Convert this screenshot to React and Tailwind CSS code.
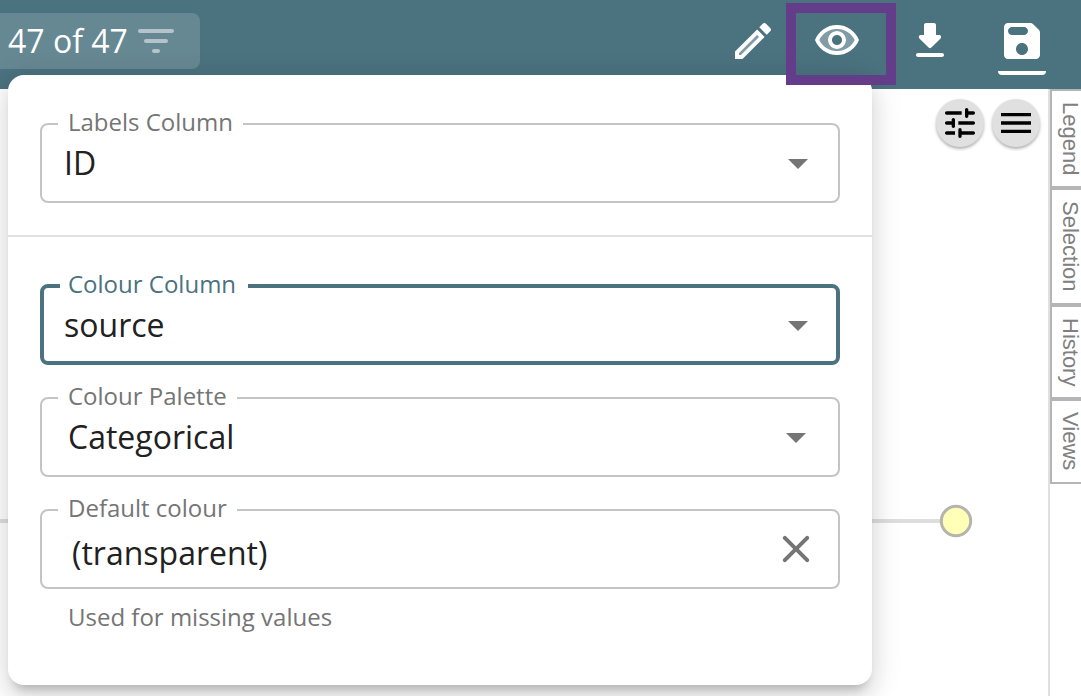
const FONT = "font-['Open_Sans','Noto_Sans',sans-serif]";

function Icon({ children, className = "size-12" }) {
  return (
    <svg viewBox="0 0 24 24" fill="currentColor" className={className}>
      {children}
    </svg>
  );
}

function Arrow({ className = "" }) {
  return (
    <Icon className={`size-12 shrink-0 text-[#757575] ${className}`}>
      <path d="M7 10l5 5 5-5z" />
    </Icon>
  );
}

function Field({ label, focused, value, valueClass, children }) {
  return (
    <fieldset
      className={
        focused
          ? "h-[94px] min-w-0 rounded-lg border-4 border-[#4b727f] px-4"
          : "h-[94px] min-w-0 rounded-lg border-2 border-[#c4c4c4] px-4"
      }
    >
      <legend
        className={
          focused
            ? "h-[30px] w-[188px] pl-2 text-2xl leading-[26px] whitespace-nowrap text-[#4b727f]"
            : "h-[30px] px-[10px] text-2xl leading-[26px] whitespace-nowrap text-[#757575]"
        }
      >
        {label}
      </legend>
      <div className="flex justify-between">
        <span className={`text-[32px] leading-[48px] text-[#212121] ${valueClass}`}>{value}</span>
        {children}
      </div>
    </fieldset>
  );
}

function Tab({ label, className }) {
  return (
    <div className={`flex w-[31px] items-center justify-center border-y-2 border-l-2 border-[#b5b5b5] bg-white pl-[7px] ${className}`}>
      <span className="font-['Liberation_Sans',sans-serif] text-[22px] leading-[22px] whitespace-nowrap text-[#808080] [writing-mode:vertical-rl]">
        {label}
      </span>
    </div>
  );
}

export default function App() {
  return (
    <div className={`relative flex h-[696px] w-[1081px] flex-col overflow-hidden bg-white ${FONT}`}>
      <header className="flex h-[89px] shrink-0 justify-between bg-[#4b727f] text-white">
        <div className="mt-[13px] flex h-14 w-[200px] items-center rounded-r-lg bg-[#668892] pl-2">
          <span className="w-[124px] text-[32px] leading-10 whitespace-nowrap">47 of 47</span>
          <Icon className="size-12 shrink-0 text-[#b4c4ca]">
            <path d="M11 18h2c.55 0 1-.45 1-1s-.45-1-1-1h-2c-.55 0-1 .45-1 1s.45 1 1 1zM3 7c0 .55.45 1 1 1h16c.55 0 1-.45 1-1s-.45-1-1-1H4c-.55 0-1 .45-1 1zm4 6h10c.55 0 1-.45 1-1s-.45-1-1-1H7c-.55 0-1 .45-1 1s.45 1 1 1z" />
          </Icon>
        </div>
        <nav className="flex pt-[17px] pr-[35px]">
          <Icon>
            <path opacity=".3" d="M5 18.08V19h.92l9.06-9.06-.92-.92z" />
            <path d="M20.71 7.04c.39-.39.39-1.02 0-1.41l-2.34-2.34c-.2-.2-.45-.29-.71-.29s-.51.1-.7.29l-1.83 1.83 3.75 3.75 1.83-1.83zM3 17.25V21h3.75L17.81 9.94l-3.75-3.75L3 17.25zM5.92 19H5v-.92l9.06-9.06.92.92L5.92 19z" />
          </Icon>
          <Icon className="ml-9 size-12">
            <path opacity=".3" d="M12 6c-3.79 0-7.17 2.13-8.82 5.5C4.83 14.87 8.21 17 12 17s7.17-2.13 8.82-5.5C19.17 8.13 15.79 6 12 6zm0 10c-2.48 0-4.5-2.02-4.5-4.5S9.52 7 12 7s4.5 2.02 4.5 4.5S14.48 16 12 16z" />
            <path d="M12 4C7 4 2.73 7.11 1 11.5 2.73 15.89 7 19 12 19s9.27-3.11 11-7.5C21.27 7.11 17 4 12 4zm0 13c-3.79 0-7.17-2.13-8.82-5.5C4.83 8.13 8.21 6 12 6s7.17 2.13 8.82 5.5C19.17 14.87 15.79 17 12 17zm0-10c-2.48 0-4.5 2.02-4.5 4.5S9.52 16 12 16s4.5-2.02 4.5-4.5S14.48 7 12 7zm0 7c-1.38 0-2.5-1.12-2.5-2.5S10.62 9 12 9s2.5 1.12 2.5 2.5S13.38 14 12 14z" />
          </Icon>
          <Icon className="ml-[45px] size-12">
            <path d="M16.59 9H15V4c0-.55-.45-1-1-1h-4c-.55 0-1 .45-1 1v5H7.41c-.89 0-1.34 1.08-.71 1.71l4.59 4.59c.39.39 1.02.39 1.41 0l4.59-4.59c.63-.63.19-1.71-.7-1.71zM5 19c0 .55.45 1 1 1h12c.55 0 1-.45 1-1s-.45-1-1-1H6c-.55 0-1 .45-1 1z" />
          </Icon>
          <div className="ml-11 flex h-[58px] flex-col justify-between">
            <Icon>
              <path d="M17.59 3.59c-.38-.38-.89-.59-1.42-.59H5c-1.11 0-2 .9-2 2v14c0 1.1.9 2 2 2h14c1.1 0 2-.9 2-2V7.83c0-.53-.21-1.04-.59-1.41l-2.82-2.83zM12 19c-1.66 0-3-1.34-3-3s1.34-3 3-3 3 1.34 3 3-1.34 3-3 3zm1-10H7c-1.1 0-2-.9-2-2s.9-2 2-2h6c1.1 0 2 .9 2 2s-.9 2-2 2z" />
            </Icon>
            <div className="h-1 rounded-b bg-white" />
          </div>
        </nav>
      </header>

      <main className="flex min-h-0 flex-1">
        <div className="flex flex-1 items-start justify-end gap-2 pt-[10px] pr-2">
          <button className="flex size-12 items-center justify-center rounded-full bg-[#e0e0e0] shadow-[0_2px_3px_rgba(0,0,0,0.3)]">
            <Icon className="size-10">
              <path d="M3 18c0 .55.45 1 1 1h5v-2H4c-.55 0-1 .45-1 1zM3 6c0 .55.45 1 1 1h9V5H4c-.55 0-1 .45-1 1zm10 14v-1h7c.55 0 1-.45 1-1s-.45-1-1-1h-7v-1c0-.55-.45-1-1-1s-1 .45-1 1v4c0 .55.45 1 1 1s1-.45 1-1zM7 10v1H4c-.55 0-1 .45-1 1s.45 1 1 1h3v1c0 .55.45 1 1 1s1-.45 1-1v-4c0-.55-.45-1-1-1s-1 .45-1 1zm14 2c0-.55-.45-1-1-1h-9v2h9c.55 0 1-.45 1-1zm-5-3c.55 0 1-.45 1-1V7h3c.55 0 1-.45 1-1s-.45-1-1-1h-3V4c0-.55-.45-1-1-1s-1 .45-1 1v4c0 .55.45 1 1 1z" />
            </Icon>
          </button>
          <button className="flex size-12 items-center justify-center rounded-full bg-[#e0e0e0] shadow-[0_2px_3px_rgba(0,0,0,0.3)]">
            <Icon className="size-10">
              <path d="M3 18h18v-2H3v2zm0-5h18v-2H3v2zm0-7v2h18V6H3z" />
            </Icon>
          </button>
        </div>
        <aside className="flex w-[33px] shrink-0 flex-col border-l-2 border-[#e0e0e0]">
          <Tab label="Legend" className="h-[99px]" />
          <Tab label="Selection" className="h-[117px]" />
          <Tab label="History" className="h-[94px]" />
          <Tab label="Views" className="h-[85px]" />
        </aside>
      </main>

      <svg className="absolute top-[500px] left-0 h-11 w-[1000px]" viewBox="0 0 1000 44">
        <path d="M0 21H942" stroke="#dedede" strokeWidth="4" />
        <circle cx="956" cy="21" r="14.7" fill="#ffffb8" stroke="#b5b5ad" strokeWidth="3" />
      </svg>

      <section className="absolute top-[75px] left-2 h-[610px] w-[864px] rounded-2xl bg-white shadow-[0_10px_10px_-6px_rgba(0,0,0,0.2),0_16px_20px_2px_rgba(0,0,0,0.04),0_6px_28px_4px_rgba(0,0,0,0.12)]">
        <div className="h-[162px] border-b-2 border-[#e0e0e0] px-8 pt-[34px]">
          <Field label="Labels Column" value="ID" valueClass="pl-1.5">
            <Arrow />
          </Field>
        </div>
        <div className="flex flex-col gap-[18px] px-8 pt-[34px]">
          <Field label="Colour Column" value="source" valueClass="pl-1" focused>
            <Arrow className="mr-[-2px]" />
          </Field>
          <Field label="Colour Palette" value="Categorical" valueClass="pl-2.5">
            <Arrow className="mr-0.5" />
          </Field>
          <Field label="Default colour" value="(transparent)" valueClass="pl-[14px] pt-1">
            <Icon className="mr-0.5 size-12 text-[#757575]">
              <path d="M18.3 5.71a.9959.9959 0 0 0-1.41 0L12 10.59 7.11 5.7a.9959.9959 0 0 0-1.41 0c-.39.39-.39 1.02 0 1.41L10.59 12 5.7 16.89c-.39.39-.39 1.02 0 1.41.39.39 1.02.39 1.41 0L12 13.41l4.89 4.89c.39.39 1.02.39 1.41 0 .39-.39.39-1.02 0-1.41L13.41 12l4.89-4.89c.38-.38.38-1.02 0-1.4z" />
            </Icon>
          </Field>
          <p className="-mt-[7px] pl-7 text-2xl leading-[34px] text-[#757575]">Used for missing values</p>
        </div>
      </section>

      <div className="absolute top-[3px] left-[786px] h-[82px] w-[110px] border-10 border-[#633c8a]" />
    </div>
  );
}
